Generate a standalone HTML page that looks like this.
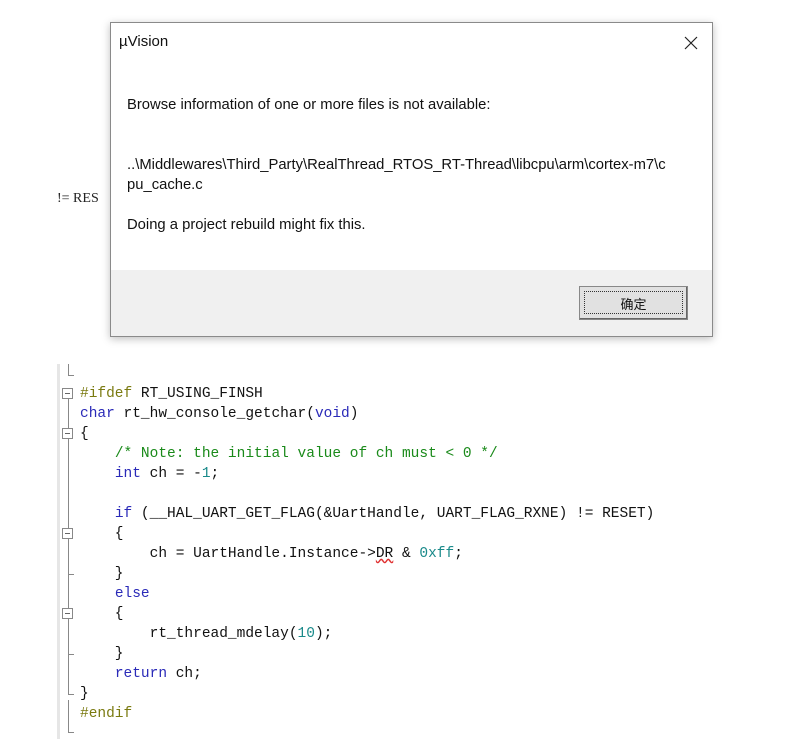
<!DOCTYPE html>
<html><head><meta charset="utf-8"><style>
body{margin:0;width:807px;height:743px;background:#fff;position:relative;overflow:hidden;font-family:"Liberation Sans","Noto Sans CJK SC",sans-serif}
.code{position:absolute;left:80px;top:384px;font-family:"Liberation Mono","Noto Sans CJK SC",monospace;font-size:14.5px;line-height:20px;color:#111;white-space:pre}
.k{color:#2a2ab8}.c{color:#1a8a1a}.n{color:#1a8a8a}.p{color:#7a7a10}
.strip{position:absolute;left:57px;top:364px;width:3px;height:375px;background:#e6e6e6}
.vl{position:absolute;left:68px;width:1px;background:#888}
.box{position:absolute;left:62px;width:11px;height:11px;border:1px solid #888;background:#fff;box-sizing:border-box}
.box:after{content:"";position:absolute;left:2px;right:2px;top:4px;height:1px;background:#666}
.tk{position:absolute;left:68px;width:6px;height:1px;background:#888}
.dlg{position:absolute;left:110px;top:22px;width:601px;height:313px;background:#fff;border:1px solid #8a8a8a;box-shadow:0 2px 8px rgba(0,0,0,.25)}
.foot{position:absolute;left:0;right:0;bottom:0;height:66px;background:#f0f0f0}
.t{position:absolute;font-size:14.8px;color:#111;white-space:nowrap}
</style></head><body>
<div style="position:absolute;left:57px;top:191px;font-family:'Liberation Serif',serif;font-size:14px;color:#222">!= RES</div>

<div class="strip"></div>
<div class="vl" style="top:364px;height:11px"></div><div class="tk" style="top:375px"></div>
<div class="vl" style="top:394px;height:280px"></div>
<div class="vl" style="top:700px;height:32px"></div><div class="tk" style="top:732px"></div>
<div class="box" style="top:388px"></div>
<div class="box" style="top:428px"></div>
<div class="box" style="top:528px"></div>
<div class="tk" style="top:574px"></div>
<div class="box" style="top:608px"></div>
<div class="tk" style="top:654px"></div>
<div class="vl" style="top:674px;height:20px"></div>
<div class="tk" style="top:694px"></div>

<div class="code"><span class="p">#ifdef</span> RT_USING_FINSH
<span class="k">char</span> rt_hw_console_getchar(<span class="k">void</span>)
{
    <span class="c">/* Note: the initial value of ch must &lt; 0 */</span>
    <span class="k">int</span> ch = -<span class="n">1</span>;

    <span class="k">if</span> (__HAL_UART_GET_FLAG(&amp;UartHandle, UART_FLAG_RXNE) != RESET)
    {
        ch = UartHandle.Instance-&gt;<span style="text-decoration:underline wavy #e03030">DR</span> &amp; <span class="n">0xff</span>;
    }
    <span class="k">else</span>
    {
        rt_thread_mdelay(<span class="n">10</span>);
    }
    <span class="k">return</span> ch;
}
<span class="p">#endif</span></div>

<div class="dlg">
<div class="t" style="left:8px;top:10px;font-size:15px">µVision</div>
<svg style="position:absolute;left:573px;top:13px" width="14" height="14"><path d="M1 1L13 13M13 1L1 13" stroke="#222" stroke-width="1.2"/></svg>
<div class="t" style="left:16px;top:74px">Browse information of one or more files is not available:</div>
<div class="t" style="left:16px;top:134px">..\Middlewares\Third_Party\RealThread_RTOS_RT-Thread\libcpu\arm\cortex-m7\c</div>
<div class="t" style="left:16px;top:154px">pu_cache.c</div>
<div class="t" style="left:16px;top:194px">Doing a project rebuild might fix this.</div>
<div class="foot">
<div style="position:absolute;left:468px;top:16px;width:109px;height:34px;background:#e1e1e1;border:1px solid #888;box-sizing:border-box;box-shadow:inset -1px -1px 0 #666">
<div style="position:absolute;left:4px;top:4px;right:4px;bottom:5px;border:1px dotted #333"></div>
<div style="position:absolute;left:0;right:0;top:7px;text-align:center;font-size:13px;color:#111">确定</div>
</div>
</div>
</div>
</body></html>
